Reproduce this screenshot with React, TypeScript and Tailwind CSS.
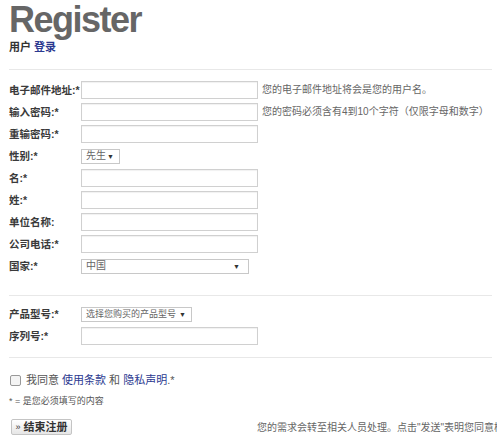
import type { ReactNode } from 'react';

const font = { fontFamily: '"Liberation Sans", "Noto Sans CJK SC", sans-serif' };

function Row({ label, children }: { label: string; children: ReactNode }) {
  return (
    <div className="flex h-[22px] items-center">
      <label className="w-[72px] shrink-0 whitespace-nowrap text-[10.5px] font-bold leading-none text-[#3a3a3a]">
        {label}
      </label>
      {children}
    </div>
  );
}

function TextInput({ hint }: { hint?: string }) {
  return (
    <>
      <div className="h-[18px] w-[177px] shrink-0 border border-[#d0d0d0] bg-white shadow-[inset_0_1px_1px_rgba(0,0,0,0.06)]" />
      {hint && (
        <span className="ml-[4px] whitespace-nowrap text-[10px] leading-none text-[#666]">{hint}</span>
      )}
    </>
  );
}

function FakeSelect({ value, width }: { value: string; width: string }) {
  return (
    <div
      className={`flex h-[15px] shrink-0 items-center justify-between whitespace-nowrap border border-[#c8c8c8] bg-white pl-[4px] pr-[5px] leading-none text-[#666] ${width}`}
    >
      <span>{value}</span>
      <span className="text-[7px] text-[#333]">▼</span>
    </div>
  );
}

function Divider({ className }: { className: string }) {
  return <div className={`h-px w-[483px] bg-[#e8e8e8] ${className}`} />;
}

export default function App() {
  return (
    <div className="h-[445px] w-[497px] overflow-hidden bg-white pl-[9px]" style={font}>
      <h1 className="mt-[2px] text-[36px] font-bold leading-[36px] tracking-[-1.5px] text-[#666]">Register</h1>
      <p className="mt-[2px] text-[11px] font-bold leading-[14px] text-[#333]">
        用户 <a className="text-[#2b3990]">登录</a>
      </p>

      <Divider className="mt-[15px]" />

      <div className="mt-[9px]">
        <Row label="电子邮件地址:*">
          <TextInput hint="您的电子邮件地址将会是您的用户名。" />
        </Row>
        <Row label="输入密码:*">
          <TextInput hint="您的密码必须含有4到10个字符（仅限字母和数字）" />
        </Row>
        <Row label="重输密码:*">
          <TextInput />
        </Row>
        <Row label="性别:*">
          <FakeSelect value="先生" width="w-[39px] text-[10px]" />
        </Row>
        <Row label="名:*">
          <TextInput />
        </Row>
        <Row label="姓:*">
          <TextInput />
        </Row>
        <Row label="单位名称:">
          <TextInput />
        </Row>
        <Row label="公司电话:*">
          <TextInput />
        </Row>
        <Row label="国家:*">
          <FakeSelect value="中国" width="w-[168px] pr-[8px] text-[10px]" />
        </Row>
      </div>

      <Divider className="mt-[18px]" />

      <div className="mt-[7px]">
        <Row label="产品型号:*">
          <FakeSelect value="选择您购买的产品型号" width="w-[111px] text-[9px]" />
        </Row>
        <Row label="序列号:*">
          <TextInput />
        </Row>
      </div>

      <Divider className="mt-[10px]" />

      <div className="mt-[17px] flex items-center text-[11px] leading-none text-[#555]">
        <span className="ml-[1px] h-[11px] w-[11px] rounded-[2px] border border-[#999] bg-[#f4f4f4]" />
        <span className="ml-[5px]">
          我同意 <a className="text-[#2b3990]">使用条款</a> 和 <a className="text-[#2b3990]">隐私声明</a>.*
        </span>
      </div>

      <p className="mt-[11px] text-[9px] leading-none text-[#555]">* = 是您必须填写的内容</p>

      <div className="mt-[13px] flex items-end">
        <div className="w-[248px] shrink-0">
          <button
            type="button"
            className="ml-[2px] flex h-[16px] w-[61px] items-center justify-center rounded-[2px] border border-[#c4c4c4] bg-gradient-to-b from-white to-[#e6e6e6] text-[11px] font-bold leading-none text-[#333]"
          >
            <span className="mr-[3px] text-[9px] font-normal">»</span>结束注册
          </button>
        </div>
        <p className="mb-[2px] whitespace-nowrap text-[10px] leading-none text-[#666]">
          您的需求会转至相关人员处理。点击"发送"表明您同意梅特勒-托利多的隐私声明。
        </p>
      </div>
    </div>
  );
}
